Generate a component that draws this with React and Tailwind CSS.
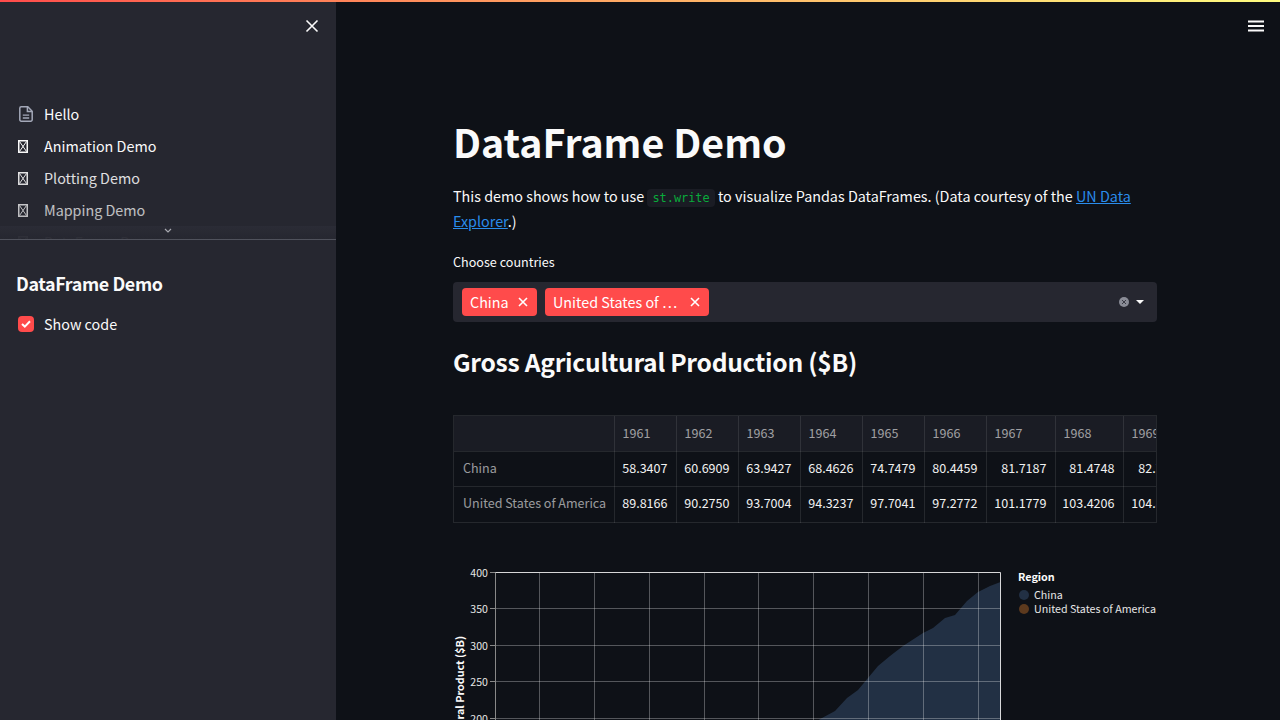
import React from "react";

const SANS = 'font-["Noto_Sans_CJK_SC","Noto_Sans_CJK_JP",sans-serif]';

function Tofu() {
  return (
    <svg width="10" height="13" viewBox="0 0 10 13" className="block" fill="none" stroke="#fafafa" strokeWidth="1">
      <rect x="0.75" y="0.75" width="8.5" height="11.5" strokeWidth="1.5" />
      <path d="M1.5 1.5 L8.5 11.5 M8.5 1.5 L1.5 11.5" />
    </svg>
  );
}

function DocIcon() {
  return (
    <svg width="14" height="16" viewBox="0 0 14 16" fill="none" stroke="#a3a8b8" strokeWidth="1.5" className="block">
      <path d="M2.2 0.8 H8.8 L13.2 5.2 V13.8 A1.4 1.4 0 0 1 11.8 15.2 H2.2 A1.4 1.4 0 0 1 0.8 13.8 V2.2 A1.4 1.4 0 0 1 2.2 0.8 Z" />
      <path d="M8.4 1 V5.6 H13" />
      <path d="M3.8 9.2 H10.2 M3.8 12 H10.2" strokeWidth="1.3" />
    </svg>
  );
}

function NavItem({ icon, label, pad }) {
  return (
    <div className="flex h-8 items-center">
      <div className={`flex w-[28px] ${pad}`}>{icon}</div>
      <span className="text-[14.35px] leading-[32px] text-[#fafafa]">{label}</span>
    </div>
  );
}

function Sidebar() {
  return (
    <aside className="flex h-full w-[336px] shrink-0 flex-col bg-[#262730]">
      <div className="flex h-[98px] shrink-0 justify-end pr-[17px] pt-[19px]">
        <svg width="14" height="14" viewBox="0 0 14 14" stroke="#fafafa" strokeWidth="1.6" className="block">
          <path d="M1.5 1.5 L12.5 12.5 M12.5 1.5 L1.5 12.5" />
        </svg>
      </div>
      <div className="relative h-[142px] shrink-0 overflow-hidden border-b border-[#50525c]">
        <div className="px-[16px] pb-[8px]">
          <NavItem icon={<DocIcon />} pad="pl-[3px]" label="Hello" />
          <NavItem icon={<Tofu />} pad="pl-[2px]" label="Animation Demo" />
          <NavItem icon={<Tofu />} pad="pl-[2px]" label="Plotting Demo" />
          <NavItem icon={<Tofu />} pad="pl-[2px]" label="Mapping Demo" />
          <NavItem icon={<Tofu />} pad="pl-[2px]" label="DataFrame Demo" />
        </div>
        <div className="absolute inset-x-0 bottom-0 h-[90px] bg-gradient-to-b from-[#26273000] to-[#26273066]" />
        <div className="absolute inset-x-0 bottom-0 flex h-[13px] justify-center bg-gradient-to-b from-[#2b2c36f5] to-[#262730f0]">
          <svg width="8" height="5" viewBox="0 0 8 5" fill="none" stroke="#a8a9b0" strokeWidth="1.2" className="mt-[2px] block">
            <path d="M1 1 L4 4 L7 1" />
          </svg>
        </div>
      </div>
      <div className="px-[16px] pt-[28px]">
        <h2 className="text-[17.9px] font-bold leading-[30px] tracking-[-0.38px] text-[#fafafa]">DataFrame Demo</h2>
        <div className="mt-[14px] flex items-center">
          <div className="ml-[2px] flex h-4 w-4 items-center justify-center rounded bg-[#ff4b4b]">
            <svg width="10" height="8" viewBox="0 0 10 8" fill="none" stroke="#fff" strokeWidth="2" className="block">
              <path d="M1 4 L3.8 6.6 L9 1.2" />
            </svg>
          </div>
          <span className="ml-[10px] text-[14.35px] leading-[24px] text-[#fafafa]">Show code</span>
        </div>
      </div>
    </aside>
  );
}

function Tag({ label, width }) {
  return (
    <div className={`flex h-7 items-center justify-between rounded bg-[#ff4b4b] pl-2 pr-[9px] text-[14.35px] leading-[28px] text-white ${width}`}>
      <span className="whitespace-nowrap">{label}</span>
      <svg width="10" height="10" viewBox="0 0 10 10" stroke="#fff" strokeWidth="1.6" className="block">
        <path d="M1 1 L9 9 M9 1 L1 9" />
      </svg>
    </div>
  );
}

const YEARS = [
  ["1961", "58.3407", "89.8166", "w-[62px]"],
  ["1962", "60.6909", "90.2750", "w-[62px]"],
  ["1963", "63.9427", "93.7004", "w-[62px]"],
  ["1964", "68.4626", "94.3237", "w-[62px]"],
  ["1965", "74.7479", "97.7041", "w-[62px]"],
  ["1966", "80.4459", "97.2772", "w-[62px]"],
  ["1967", "81.7187", "101.1779", "w-[69px]"],
  ["1968", "81.4748", "103.4206", "w-[68px]"],
  ["1969", "82.7117", "104.8801", "w-[69px]"],
];

function DataTable() {
  const td = "border-r border-b border-[#fafafa1a]";
  return (
    <div className="mt-[34px] w-[704px] overflow-hidden border-t border-l border-r border-[#fafafa1a]">
      <table className="w-[738px] table-fixed border-collapse text-[12.55px]">
        <thead>
          <tr className="h-[35px] bg-[#1a1c24]">
            <th className={`${td} w-[160px]`} />
            {YEARS.map((y) => (
              <th key={y[0]} className={`${td} ${y[3]} pl-[8px] text-left font-normal text-[#fafafa99]`}>{y[0]}</th>
            ))}
          </tr>
        </thead>
        <tbody>
          <tr className="h-[35px]">
            <td className={`${td} pl-[9px] text-[#fafafa99]`}>China</td>
            {YEARS.map((y) => (
              <td key={y[0]} className={`${td} whitespace-nowrap pr-[8px] text-right text-[#f2f2f2]`}>{y[1]}</td>
            ))}
          </tr>
          <tr className="h-[36px]">
            <td className={`${td} whitespace-nowrap pb-[1px] pl-[9px] text-[#fafafa99]`}>United States of America</td>
            {YEARS.map((y) => (
              <td key={y[0]} className={`${td} whitespace-nowrap pb-[1px] pr-[8px] text-right text-[#f2f2f2]`}>{y[2]}</td>
            ))}
          </tr>
        </tbody>
      </table>
    </div>
  );
}

function Chart() {
  const xs = [539.5, 594.5, 649.5, 704.5, 758.5, 813.5, 868.5, 923.5, 978.5];
  const ys = [608.5, 645.5, 681.5, 718.5];
  const ox = 453;
  const oy = 560;
  const area = "M817 721 L822 718 L835 711 L847 698 L858 690 L868 678 L878 666 L890 656 L903 646 L923 633 L933 628 L945 618 L955 615 L967 601 L978 592 L990 586 L1000.5 582 L1000.5 900 L817 900 Z";
  return (
    <svg width="704" height="200" viewBox={`${ox} ${oy} 704 200`} className="mt-[37px] block" fontFamily="'Noto Sans CJK SC', sans-serif">
      <path d={area} fill="#223044" />
      {xs.map((x) => (
        <line key={x} x1={x} x2={x} y1={573} y2={760} stroke="#fafafa" strokeOpacity="0.3" />
      ))}
      {ys.map((y) => (
        <line key={y} x1={495.5} x2={1000} y1={y} y2={y} stroke="#fafafa" strokeOpacity="0.3" />
      ))}
      <path d="M495.5 760 V572.5 H1000.5 V760" fill="none" stroke="#fafafa" strokeOpacity="0.85" />
      <path d="M495.5 760 V573" fill="none" stroke="#888" />
      {[[400, 572.5], [350, 608.5], [300, 645.5], [250, 681.5], [200, 718.5]].map(([t, y]) => (
        <g key={t}>
          <line x1={490} x2={495} y1={y} y2={y} stroke="#888" />
          <text x={488} y={y + 4} textAnchor="end" fontSize="10.6" fill="#e6e6e6">{t}</text>
        </g>
      ))}
      <text transform="translate(464 636) rotate(-90)" textAnchor="end" fontSize="10.8" fontWeight="700" fill="#fafafa">Gross Agricultural Product ($B)</text>
      <text x={1018} y={581} fontSize="10.8" fontWeight="700" fill="#fafafa">Region</text>
      <circle cx={1024} cy={595} r={5} fill="#223044" />
      <text x={1034} y={599} fontSize="10.7" fill="#e6e6e6">China</text>
      <circle cx={1024} cy={609} r={5} fill="#5d3a1e" />
      <text x={1034} y={613} fontSize="10.7" fill="#e6e6e6">United States of America</text>
    </svg>
  );
}

function Main() {
  return (
    <main className="relative h-full flex-1 overflow-hidden bg-[#0e1117] pl-[117px] pt-[115px]">
      <svg width="16" height="12" viewBox="0 0 16 12" fill="#fafafa" className="absolute right-[16px] top-[19.5px] block">
        <rect x="0" y="0.5" width="16" height="2" />
        <rect x="0" y="5" width="16" height="2" />
        <rect x="0" y="9.5" width="16" height="2" />
      </svg>
      <div className="w-[704px] text-[#fafafa]">
        <h1 className="text-[39.3px] font-bold leading-[52px]">DataFrame Demo</h1>
        <p className="mt-[16px] text-[14.35px] leading-[25px]">
          This demo shows how to use{" "}
          <code className='rounded bg-[#1a1c24] px-[5px] py-[2px] font-["DejaVu_Sans_Mono",monospace] text-[11.9px] leading-none text-[#09ab3b]'>st.write</code>{" "}
          to visualize Pandas DataFrames. (Data courtesy of the{" "}
          <a className="text-[#2a8ceb] underline">UN Data Explorer</a>.)
        </p>
        <label className="mt-[19px] block text-[12.6px] leading-[20px]">Choose countries</label>
        <div className="mt-[10px] flex h-10 items-center rounded bg-[#262730] pl-[9px] pr-[13px]">
          <div className="flex gap-2">
            <Tag label="China" width="w-[75px]" />
            <Tag label="United States of …" width="w-[164px]" />
          </div>
          <div className="ml-auto flex items-center gap-[7px]">
            <div className="flex h-[10px] w-[10px] items-center justify-center rounded-full bg-[#8a8c96]">
              <svg width="4" height="4" viewBox="0 0 4 4" stroke="#262730" strokeWidth="0.8" className="block">
                <path d="M0 0 L4 4 M4 0 L0 4" />
              </svg>
            </div>
            <div className="h-0 w-0 border-x-[4px] border-t-[4px] border-x-transparent border-t-[#fafafa]" />
          </div>
        </div>
        <h2 className="mt-[19px] text-[24.6px] font-bold leading-[40px] tracking-[-0.26px]">Gross Agricultural Production ($B)</h2>
        <DataTable />
        <Chart />
      </div>
    </main>
  );
}

export default function App() {
  return (
    <div className={`relative flex h-[720px] w-[1280px] overflow-hidden ${SANS}`}>
      <div className="absolute inset-x-0 top-0 z-10 h-[2px] bg-gradient-to-r from-[#ff4b4b] to-[#fffd80]" />
      <Sidebar />
      <Main />
    </div>
  );
}
